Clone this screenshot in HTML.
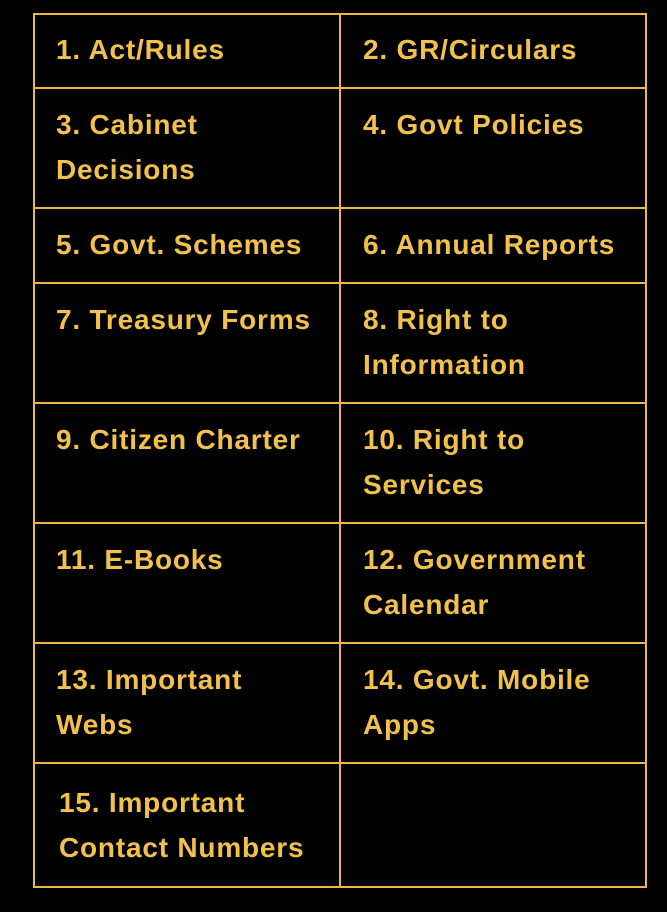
<!DOCTYPE html>
<html><head><meta charset="utf-8"><style>
html,body{margin:0;padding:0;background:#000;width:667px;height:912px;overflow:hidden}
.l{position:absolute;background:#efb845}
.t{position:absolute;color:#f2c14c;font-family:"Liberation Sans",sans-serif;font-weight:bold;font-size:28px;letter-spacing:0.8px;line-height:45px;white-space:nowrap}
</style></head><body>
<div class="l" style="left:33px;top:13px;width:614px;height:2px"></div>
<div class="l" style="left:33px;top:886px;width:614px;height:2px"></div>
<div class="l" style="left:33px;top:13px;width:2px;height:875px"></div>
<div class="l" style="left:645px;top:13px;width:2px;height:875px"></div>
<div class="l" style="left:339px;top:13px;width:2px;height:875px"></div>
<div class="l" style="left:33px;top:87px;width:614px;height:2px"></div>
<div class="l" style="left:33px;top:207px;width:614px;height:2px"></div>
<div class="l" style="left:33px;top:282px;width:614px;height:2px"></div>
<div class="l" style="left:33px;top:402px;width:614px;height:2px"></div>
<div class="l" style="left:33px;top:522px;width:614px;height:2px"></div>
<div class="l" style="left:33px;top:642px;width:614px;height:2px"></div>
<div class="l" style="left:33px;top:762px;width:614px;height:2px"></div>

<div class="t" style="left:56px;top:27px">1. Act/Rules</div>
<div class="t" style="left:363px;top:27px">2. GR/Circulars</div>
<div class="t" style="left:56px;top:102px">3. Cabinet<br>Decisions</div>
<div class="t" style="left:363px;top:102px">4. Govt Policies</div>
<div class="t" style="left:56px;top:222px">5. Govt. Schemes</div>
<div class="t" style="left:363px;top:222px">6. Annual Reports</div>
<div class="t" style="left:56px;top:297px">7. Treasury Forms</div>
<div class="t" style="left:363px;top:297px">8. Right to<br>Information</div>
<div class="t" style="left:56px;top:417px">9. Citizen Charter</div>
<div class="t" style="left:363px;top:417px">10. Right to<br>Services</div>
<div class="t" style="left:56px;top:537px">11. E-Books</div>
<div class="t" style="left:363px;top:537px">12. Government<br>Calendar</div>
<div class="t" style="left:56px;top:657px">13. Important<br>Webs</div>
<div class="t" style="left:363px;top:657px">14. Govt. Mobile<br>Apps</div>
<div class="t" style="left:59px;top:780px">15. Important<br>Contact Numbers</div>
</body></html>
